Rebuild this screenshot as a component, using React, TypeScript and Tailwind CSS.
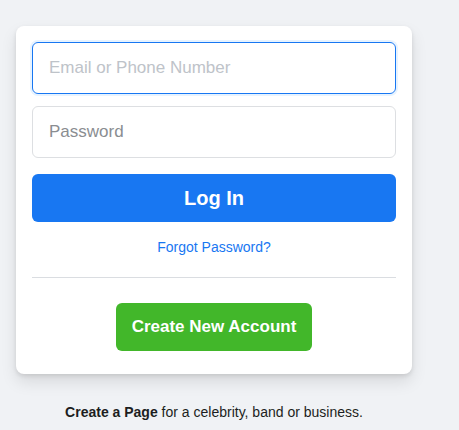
export default function App() {
  return (
    <main
      className="min-h-[430px] bg-[#f0f2f5] px-4 pt-[26px]"
      style={{ fontFamily: '"Liberation Sans", Arial, Helvetica, sans-serif' }}
    >
      <div className="w-[396px]">
        <form className="flex flex-col rounded-lg bg-white px-4 pt-4 pb-[23px] shadow-[0_2px_4px_rgba(0,0,0,0.1),0_8px_16px_rgba(0,0,0,0.1)]">
          <input
            type="text"
            autoFocus
            placeholder="Email or Phone Number"
            className="h-[52px] rounded-md border border-[#1877f2] px-4 text-[17px] text-[#1c1e21] shadow-[0_0_0_2px_#e7f3ff] outline-none placeholder:text-[#bec3c9]"
          />
          <input
            type="password"
            placeholder="Password"
            className="mt-3 h-[52px] rounded-md border border-[#dddfe2] px-4 text-[17px] text-[#1c1e21] outline-none placeholder:text-[#8a8d91]"
          />
          <button
            type="button"
            className="mt-4 h-12 rounded-md bg-[#1877f2] text-[20px] font-bold text-white"
          >
            Log In
          </button>
          <a href="#" className="mt-4 self-center text-sm leading-[19px] text-[#1877f2]">
            Forgot Password?
          </a>
          <div className="mt-5 border-b border-[#dadde1]" />
          <button
            type="button"
            className="mt-[25px] h-12 self-center rounded-md bg-[#42b72a] px-4 text-[17px] font-bold text-white"
          >
            Create New Account
          </button>
        </form>
        <p className="mt-7 text-center text-sm text-[#1c1e21]">
          <a href="#" className="font-bold">
            Create a Page
          </a>{" "}
          for a celebrity, band or business.
        </p>
      </div>
    </main>
  );
}
